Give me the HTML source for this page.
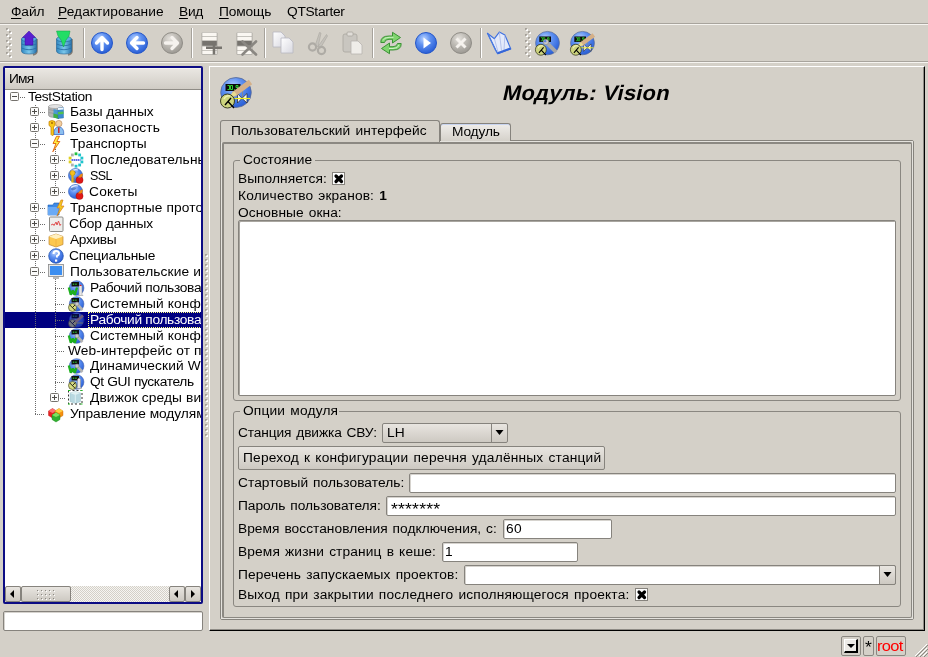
<!DOCTYPE html>
<html><head><meta charset="utf-8"><style>
*{box-sizing:border-box}
html,body{margin:0;padding:0}
body{width:928px;height:657px;overflow:hidden;position:relative;background:#d4d0c8;font-family:"Liberation Sans",sans-serif;font-size:12.5px;letter-spacing:.25px;word-spacing:1px;color:#000}
.a{position:absolute}
.t{position:absolute;white-space:nowrap;line-height:15px;-webkit-text-stroke-width:0;transform:scaleX(1.1);transform-origin:0 0}
.u{text-decoration:underline;text-underline-offset:2px}
.edit{position:absolute;background:#fff;border:1px solid #86837d;border-radius:2px;box-shadow:inset 1px 1px 0 #d6d3ce}
.btn{position:absolute;border:1px solid #86837d;border-radius:2px;background:linear-gradient(#e8e5e0,#cdc9c2)}
svg.a{overflow:visible}
</style></head><body><div id="root" style="position:absolute;left:0;top:0;width:928px;height:657px;will-change:transform">
<svg width="0" height="0" style="position:absolute">
<defs>
<radialGradient id="gblue" cx="40%" cy="30%" r="70%"><stop offset="0" stop-color="#b9d3ff"/><stop offset=".45" stop-color="#5d8ff0"/><stop offset="1" stop-color="#2a5fd6"/></radialGradient>
<radialGradient id="ggray" cx="40%" cy="30%" r="70%"><stop offset="0" stop-color="#e4e1dc"/><stop offset=".5" stop-color="#bdbab4"/><stop offset="1" stop-color="#9d9a94"/></radialGradient>
<linearGradient id="gcyl" x1="0" x2="1"><stop offset="0" stop-color="#2f86c0"/><stop offset=".5" stop-color="#7cc8ec"/><stop offset="1" stop-color="#2a74ad"/></linearGradient>
<linearGradient id="gdoc" x1="0" y1="0" x2="1" y2="1"><stop offset="0" stop-color="#ffffff"/><stop offset="1" stop-color="#d8d8e0"/></linearGradient>
</defs>
</svg>
<div class="a" style="left:0;top:23px;width:928px;height:1px;background:#a8a49d"></div>
<div class="a" style="left:0;top:24px;width:928px;height:1px;background:#f6f4f0"></div>
<div class="t" style="left:10.5px;top:5px;letter-spacing:-0.088px;"><span class="u">Ф</span>айл</div>
<div class="t" style="left:58.0px;top:5px;letter-spacing:0.065px;"><span class="u">Р</span>едактирование</div>
<div class="t" style="left:179.0px;top:5px;letter-spacing:-0.250px;"><span class="u">В</span>ид</div>
<div class="t" style="left:219.0px;top:5px;letter-spacing:-0.150px;"><span class="u">П</span>омощь</div>
<div class="t" style="left:287.0px;top:5px;letter-spacing:.4px;letter-spacing:-0.275px;">QTStarter</div>
<div class="a" style="left:0;top:61px;width:928px;height:1px;background:#a8a49d"></div>
<div class="a" style="left:0;top:62px;width:928px;height:1px;background:#f6f4f0"></div>
<svg class="a" style="left:6px;top:28px" width="13" height="32" viewBox="0 0 13 32"><rect x="1" y="1" width="2" height="2" fill="#fff"/><rect x="0" y="0" width="2" height="2" fill="#a6a29b"/><rect x="1" y="1" width="1" height="1" fill="#c8c4bd"/><rect x="4" y="4" width="2" height="2" fill="#fff"/><rect x="3" y="3" width="2" height="2" fill="#a6a29b"/><rect x="4" y="4" width="1" height="1" fill="#c8c4bd"/><rect x="1" y="7" width="2" height="2" fill="#fff"/><rect x="0" y="6" width="2" height="2" fill="#a6a29b"/><rect x="1" y="7" width="1" height="1" fill="#c8c4bd"/><rect x="4" y="10" width="2" height="2" fill="#fff"/><rect x="3" y="9" width="2" height="2" fill="#a6a29b"/><rect x="4" y="10" width="1" height="1" fill="#c8c4bd"/><rect x="1" y="13" width="2" height="2" fill="#fff"/><rect x="0" y="12" width="2" height="2" fill="#a6a29b"/><rect x="1" y="13" width="1" height="1" fill="#c8c4bd"/><rect x="4" y="16" width="2" height="2" fill="#fff"/><rect x="3" y="15" width="2" height="2" fill="#a6a29b"/><rect x="4" y="16" width="1" height="1" fill="#c8c4bd"/><rect x="1" y="19" width="2" height="2" fill="#fff"/><rect x="0" y="18" width="2" height="2" fill="#a6a29b"/><rect x="1" y="19" width="1" height="1" fill="#c8c4bd"/><rect x="4" y="22" width="2" height="2" fill="#fff"/><rect x="3" y="21" width="2" height="2" fill="#a6a29b"/><rect x="4" y="22" width="1" height="1" fill="#c8c4bd"/><rect x="1" y="25" width="2" height="2" fill="#fff"/><rect x="0" y="24" width="2" height="2" fill="#a6a29b"/><rect x="1" y="25" width="1" height="1" fill="#c8c4bd"/><rect x="4" y="28" width="2" height="2" fill="#fff"/><rect x="3" y="27" width="2" height="2" fill="#a6a29b"/><rect x="4" y="28" width="1" height="1" fill="#c8c4bd"/></svg>
<svg class="a" style="left:17px;top:30px" width="24" height="25" viewBox="0 0 24 25"><path d="M20 9 v12 q0 3 -4 4" fill="none" stroke="#3a3530" stroke-width="1.6" opacity=".55"/><path d="M4.5 9 v12 q0 3 7.5 3 q7.5 0 7.5 -3 v-12 z" fill="url(#gcyl)" stroke="#1f5f92" stroke-width=".6"/><ellipse cx="12" cy="9" rx="7.5" ry="2.8" fill="#5ab0e0" stroke="#1f5f92" stroke-width=".6"/><path d="M4.5 14 q7.5 3.5 15 0 M4.5 18 q7.5 3.5 15 0" fill="none" stroke="#2a6fa5" stroke-width=".9"/><path d="M12 1 L18.5 7.5 L16 7.5 L16 15 L8 15 L8 7.5 L5.5 7.5 Z" fill="#5a1fd0" stroke="#3b0fa0" stroke-width=".5"/></svg>
<svg class="a" style="left:52px;top:30px" width="24" height="25" viewBox="0 0 24 25"><path d="M20 9 v12 q0 3 -4 4" fill="none" stroke="#3a3530" stroke-width="1.6" opacity=".55"/><path d="M4.5 9 v12 q0 3 7.5 3 q7.5 0 7.5 -3 v-12 z" fill="url(#gcyl)" stroke="#1f5f92" stroke-width=".6"/><ellipse cx="12" cy="9" rx="7.5" ry="2.8" fill="#5ab0e0" stroke="#1f5f92" stroke-width=".6"/><path d="M4.5 14 q7.5 3.5 15 0 M4.5 18 q7.5 3.5 15 0" fill="none" stroke="#2a6fa5" stroke-width=".9"/><path d="M4.5 1 L18 1 L17 6 L14 10 L11.5 17 L9 10 L6 6 Z" fill="#22dd66" stroke="#10a040" stroke-width=".5"/></svg>
<div class="a" style="left:83px;top:28px;width:1px;height:30px;background:#a6a29b"></div>
<div class="a" style="left:84px;top:28px;width:1px;height:30px;background:#fff"></div>
<svg class="a" style="left:91px;top:32px" width="22" height="22" viewBox="0 0 22 22"><circle cx="11" cy="11" r="10.5" fill="url(#gblue)" stroke="#2456c8" stroke-width="1"/><path d="M5.5 11 L11 5.5 L16.5 11 M11 6.5 V17.5" fill="none" stroke="#ffffff" stroke-width="3.4" stroke-linecap="round" stroke-linejoin="round"/></svg>
<svg class="a" style="left:126px;top:32px" width="22" height="22" viewBox="0 0 22 22"><circle cx="11" cy="11" r="10.5" fill="url(#gblue)" stroke="#2456c8" stroke-width="1"/><path d="M11 5.5 L5.5 11 L11 16.5 M6.5 11 H17.5" fill="none" stroke="#ffffff" stroke-width="3.4" stroke-linecap="round" stroke-linejoin="round"/></svg>
<svg class="a" style="left:161px;top:32px" width="22" height="22" viewBox="0 0 22 22"><circle cx="11" cy="11" r="10.5" fill="url(#ggray)" stroke="#8f8c86" stroke-width="1"/><path d="M11 5.5 L16.5 11 L11 16.5 M15.5 11 H4.5" fill="none" stroke="#f5f2ee" stroke-width="3.4" stroke-linecap="round" stroke-linejoin="round"/></svg>
<div class="a" style="left:191px;top:28px;width:1px;height:30px;background:#a6a29b"></div>
<div class="a" style="left:192px;top:28px;width:1px;height:30px;background:#fff"></div>
<svg class="a" style="left:201px;top:31px" width="22" height="25" viewBox="0 0 22 25"><rect x=".5" y="1" width="16" height="23" rx="1.5" fill="#a8a59f"/><rect x="1.3" y="1.6" width="14.4" height="3.6" fill="#faf7f2"/><rect x="1.3" y="5.8" width="14.4" height="3.6" fill="#faf7f2"/><rect x="1.3" y="10" width="14.4" height="4.6" fill="#76736e"/><rect x="1.3" y="15.4" width="14.4" height="3.6" fill="#faf7f2"/><rect x="1.3" y="19.6" width="14.4" height="3.6" fill="#faf7f2"/><path d="M5 16.8 H21 M13 10.5 V23.5" stroke="#76736e" stroke-width="2.6"/></svg>
<svg class="a" style="left:236px;top:31px" width="22" height="25" viewBox="0 0 22 25"><rect x=".5" y="1" width="16" height="23" rx="1.5" fill="#a8a59f"/><rect x="1.3" y="1.6" width="14.4" height="3.6" fill="#faf7f2"/><rect x="1.3" y="5.8" width="14.4" height="3.6" fill="#faf7f2"/><rect x="1.3" y="10" width="14.4" height="4.6" fill="#76736e"/><rect x="1.3" y="15.4" width="14.4" height="3.6" fill="#faf7f2"/><rect x="1.3" y="19.6" width="14.4" height="3.6" fill="#faf7f2"/><path d="M6.5 10.5 L20 23.5 M20 10.5 L6.5 23.5" stroke="#8a8782" stroke-width="2.6" stroke-linecap="round"/></svg>
<div class="a" style="left:264px;top:28px;width:1px;height:30px;background:#a6a29b"></div>
<div class="a" style="left:265px;top:28px;width:1px;height:30px;background:#fff"></div>
<svg class="a" style="left:272px;top:31px" width="23" height="24" viewBox="0 0 23 24"><path d="M1 1 H9 L13 5 V16 H1 Z" fill="url(#gdoc)" stroke="#b7b7c0" stroke-width=".8"/><path d="M9 7 H17 L21 11 V22 H9 Z" fill="url(#gdoc)" stroke="#b7b7c0" stroke-width=".8"/></svg>
<svg class="a" style="left:307px;top:31px" width="22" height="25" viewBox="0 0 22 25"><path d="M8 15 L12.5 1.5 L14 2 L11 16 Z M11 15.5 L19.5 3.5 L20.5 5 L13.5 17 Z" fill="#c4c1bb" stroke="#a9a6a0" stroke-width=".6"/><circle cx="5.5" cy="16" r="3.6" fill="none" stroke="#aeaba5" stroke-width="2.2"/><circle cx="14.5" cy="19.5" r="3.6" fill="none" stroke="#aeaba5" stroke-width="2.2"/></svg>
<svg class="a" style="left:342px;top:31px" width="22" height="24" viewBox="0 0 22 24"><rect x="1" y="3" width="14" height="18" rx="2" fill="#c9c6c0" stroke="#a9a6a0" stroke-width=".8"/><rect x="5" y="1" width="6" height="4" rx="1" fill="#e0ddd8" stroke="#a9a6a0" stroke-width=".8"/><path d="M9 10 H16 L20 14 V23 H9 Z" fill="#efede9" stroke="#b7b4ae" stroke-width=".8"/></svg>
<div class="a" style="left:372px;top:28px;width:1px;height:30px;background:#a6a29b"></div>
<div class="a" style="left:373px;top:28px;width:1px;height:30px;background:#fff"></div>
<svg class="a" style="left:380px;top:32px" width="22" height="23" viewBox="0 0 22 23"><path d="M0.8 10.5 Q0.5 4 9 4 L12.5 4 L12.5 0.3 L20.5 5.5 L12.5 11 L12.5 7.3 L9 7.3 Q5 7.3 4.5 10.5 Z" fill="#7fd46e" stroke="#2f8a2a" stroke-width=".9"/><path d="M21.2 11.5 Q21.5 18 13 18 L9.5 18 L9.5 21.7 L1.5 16.5 L9.5 11 L9.5 14.7 L13 14.7 Q17 14.7 17.5 11.5 Z" fill="#7fd46e" stroke="#2f8a2a" stroke-width=".9"/><path d="M3 8.5 Q4 5.5 9 5.3 L13.5 5.3" stroke="#d8f5d0" stroke-width=".9" fill="none"/><path d="M19 13 Q18 16.5 13 16.5 L9 16.5" stroke="#d8f5d0" stroke-width=".9" fill="none"/></svg>
<svg class="a" style="left:415px;top:32px" width="22" height="22" viewBox="0 0 22 22"><circle cx="11" cy="11" r="10.5" fill="url(#gblue)" stroke="#2456c8" stroke-width="1"/><path d="M8.5 5.5 L16 11 L8.5 16.5 Z" fill="#ffffff"/></svg>
<svg class="a" style="left:450px;top:32px" width="22" height="22" viewBox="0 0 22 22"><circle cx="11" cy="11" r="10.5" fill="url(#ggray)" stroke="#8f8c86" stroke-width="1"/><path d="M6.5 6.5 L15.5 15.5 M15.5 6.5 L6.5 15.5" stroke="#f5f2ee" stroke-width="3"/></svg>
<div class="a" style="left:480px;top:28px;width:1px;height:30px;background:#a6a29b"></div>
<div class="a" style="left:481px;top:28px;width:1px;height:30px;background:#fff"></div>
<svg class="a" style="left:486px;top:30px" width="26" height="25" viewBox="0 0 26 25"><path d="M1.4 3.3 L8.4 8.7 L13.3 2.1 L18.9 5 L24.8 18.9 L11.6 23.8 Z" fill="#e4eafa" stroke="#3d6fe0" stroke-width="1.1" stroke-linejoin="round"/><path d="M8.4 8.7 L12 22 M13.3 2.1 L15.5 20.5 M18.9 5 L18 20" stroke="#a8b8e8" stroke-width=".8" fill="none"/><path d="M11.6 23.3 L24.5 18.5" stroke="#3566d8" stroke-width="2"/><path d="M2 4 L9.5 20 L11.6 23.3" stroke="#4a7ae0" stroke-width="1.2" fill="none"/></svg>
<svg class="a" style="left:525px;top:28px" width="13" height="32" viewBox="0 0 13 32"><rect x="1" y="1" width="2" height="2" fill="#fff"/><rect x="0" y="0" width="2" height="2" fill="#a6a29b"/><rect x="1" y="1" width="1" height="1" fill="#c8c4bd"/><rect x="4" y="4" width="2" height="2" fill="#fff"/><rect x="3" y="3" width="2" height="2" fill="#a6a29b"/><rect x="4" y="4" width="1" height="1" fill="#c8c4bd"/><rect x="1" y="7" width="2" height="2" fill="#fff"/><rect x="0" y="6" width="2" height="2" fill="#a6a29b"/><rect x="1" y="7" width="1" height="1" fill="#c8c4bd"/><rect x="4" y="10" width="2" height="2" fill="#fff"/><rect x="3" y="9" width="2" height="2" fill="#a6a29b"/><rect x="4" y="10" width="1" height="1" fill="#c8c4bd"/><rect x="1" y="13" width="2" height="2" fill="#fff"/><rect x="0" y="12" width="2" height="2" fill="#a6a29b"/><rect x="1" y="13" width="1" height="1" fill="#c8c4bd"/><rect x="4" y="16" width="2" height="2" fill="#fff"/><rect x="3" y="15" width="2" height="2" fill="#a6a29b"/><rect x="4" y="16" width="1" height="1" fill="#c8c4bd"/><rect x="1" y="19" width="2" height="2" fill="#fff"/><rect x="0" y="18" width="2" height="2" fill="#a6a29b"/><rect x="1" y="19" width="1" height="1" fill="#c8c4bd"/><rect x="4" y="22" width="2" height="2" fill="#fff"/><rect x="3" y="21" width="2" height="2" fill="#a6a29b"/><rect x="4" y="22" width="1" height="1" fill="#c8c4bd"/><rect x="1" y="25" width="2" height="2" fill="#fff"/><rect x="0" y="24" width="2" height="2" fill="#a6a29b"/><rect x="1" y="25" width="1" height="1" fill="#c8c4bd"/><rect x="4" y="28" width="2" height="2" fill="#fff"/><rect x="3" y="27" width="2" height="2" fill="#a6a29b"/><rect x="4" y="28" width="1" height="1" fill="#c8c4bd"/></svg>
<svg class="a" style="left:535px;top:31px" width="25" height="25" viewBox="0 0 25 25"><g transform="scale(0.78125)"><ellipse cx="16" cy="15.5" rx="15.3" ry="15" fill="url(#gblue)" stroke="#5a6a90" stroke-width=".8"/><rect x="5.5" y="7" width="15" height="7" fill="#0a0a0a"/><path d="M7.5 8.5 h2 v4 h-2 M10.5 8.5 v4 h2 v-4 z M14 12.5 h.8 M16 8.5 h2 v2 h-2 z M18 10.5 v2" fill="none" stroke="#30d030" stroke-width="1"/><path d="M14 14 L27 27" stroke="#a8a8a8" stroke-width="5"/><circle cx="14" cy="14" r="3.5" fill="#c8c8c8" stroke="#777" stroke-width=".6"/><circle cx="13" cy="13" r="1.5" fill="#5a7fe0"/><circle cx="7.5" cy="24" r="7" fill="#cdd47e" stroke="#3a3c20" stroke-width="1"/><path d="M4 22 a5 5 0 0 1 6 -3" stroke="#eef0b0" stroke-width="1.5" fill="none"/><path d="M11 21 L5 28 M8 24.5 L14 31" stroke="#000" stroke-width="1.4"/></g></svg>
<svg class="a" style="left:570px;top:31px" width="25" height="25" viewBox="0 0 25 25"><g transform="scale(0.78125)"><ellipse cx="16" cy="15.5" rx="15.3" ry="15" fill="url(#gblue)" stroke="#5a6a90" stroke-width=".8"/><rect x="5.5" y="7" width="15" height="7" fill="#0a0a0a"/><path d="M7.5 8.5 h2 v4 h-2 M10.5 8.5 v4 h2 v-4 z M14 12.5 h.8 M16 8.5 h2 v2 h-2 z M18 10.5 v2" fill="none" stroke="#30d030" stroke-width="1"/><path d="M22.5 14 v7.5" stroke="#888" stroke-width=".8"/><path d="M17.5 16.5 L22 21.3 L17.5 26 Z M27 16.5 L22 21.3 L27 26 Z" fill="#f0f0f0" stroke="#222" stroke-width=".7"/><path d="M4.5 21.5 H30" stroke="#f0f020" stroke-width="1.2"/><path d="M30.5 5 L13.5 17.5" stroke="#d5b088" stroke-width="5.5" stroke-linecap="butt"/><path d="M15.5 16 L11 19.5" stroke="#e8dc90" stroke-width="4"/><path d="M12 19 L10 20.5" stroke="#111" stroke-width="1.5"/><circle cx="7.5" cy="24" r="7" fill="#cdd47e" stroke="#3a3c20" stroke-width="1"/><path d="M4 22 a5 5 0 0 1 6 -3" stroke="#eef0b0" stroke-width="1.5" fill="none"/><path d="M11 21 L5 28 M8 24.5 L14 31" stroke="#000" stroke-width="1.4"/></g></svg>
<div class="a" style="left:3px;top:66px;width:200px;height:538px;border:2px solid #0c0c84;border-radius:2px;background:#fff"></div>
<div class="a" style="left:5px;top:68px;width:196px;height:22px;background:linear-gradient(#e9e6e1,#d0ccc5);border-bottom:1px solid #8f8c86;border-top:1px solid #f4f2ee"></div>
<div class="t" style="left:9.0px;top:72px;letter-spacing:-0.750px;">Имя</div>
<div class="a" style="left:5px;top:90px;width:196px;height:496px;overflow:hidden">
<div class="a" style="left:0;top:222px;width:196px;height:16px;background:#000080"></div>
<div class="a" style="left:30px;top:15px;width:1px;height:309px;background-image:linear-gradient(#6a6a6a 0 1px,transparent 1px 2px);background-size:1px 2px"></div>
<div class="a" style="left:50px;top:59px;width:1px;height:44px;background-image:linear-gradient(#6a6a6a 0 1px,transparent 1px 2px);background-size:1px 2px"></div>
<div class="a" style="left:50px;top:187px;width:1px;height:121px;background-image:linear-gradient(#6a6a6a 0 1px,transparent 1px 2px);background-size:1px 2px"></div>
<div class="a" style="left:15px;top:7px;width:5px;height:1px;background-image:linear-gradient(90deg,#6a6a6a 0 1px,transparent 1px 2px);background-size:2px 1px"></div>
<div class="a" style="left:35px;top:22px;width:5px;height:1px;background-image:linear-gradient(90deg,#6a6a6a 0 1px,transparent 1px 2px);background-size:2px 1px"></div>
<div class="a" style="left:35px;top:38px;width:5px;height:1px;background-image:linear-gradient(90deg,#6a6a6a 0 1px,transparent 1px 2px);background-size:2px 1px"></div>
<div class="a" style="left:35px;top:54px;width:5px;height:1px;background-image:linear-gradient(90deg,#6a6a6a 0 1px,transparent 1px 2px);background-size:2px 1px"></div>
<div class="a" style="left:55px;top:70px;width:5px;height:1px;background-image:linear-gradient(90deg,#6a6a6a 0 1px,transparent 1px 2px);background-size:2px 1px"></div>
<div class="a" style="left:55px;top:86px;width:5px;height:1px;background-image:linear-gradient(90deg,#6a6a6a 0 1px,transparent 1px 2px);background-size:2px 1px"></div>
<div class="a" style="left:55px;top:102px;width:5px;height:1px;background-image:linear-gradient(90deg,#6a6a6a 0 1px,transparent 1px 2px);background-size:2px 1px"></div>
<div class="a" style="left:35px;top:118px;width:5px;height:1px;background-image:linear-gradient(90deg,#6a6a6a 0 1px,transparent 1px 2px);background-size:2px 1px"></div>
<div class="a" style="left:35px;top:134px;width:5px;height:1px;background-image:linear-gradient(90deg,#6a6a6a 0 1px,transparent 1px 2px);background-size:2px 1px"></div>
<div class="a" style="left:35px;top:150px;width:5px;height:1px;background-image:linear-gradient(90deg,#6a6a6a 0 1px,transparent 1px 2px);background-size:2px 1px"></div>
<div class="a" style="left:35px;top:166px;width:5px;height:1px;background-image:linear-gradient(90deg,#6a6a6a 0 1px,transparent 1px 2px);background-size:2px 1px"></div>
<div class="a" style="left:35px;top:182px;width:5px;height:1px;background-image:linear-gradient(90deg,#6a6a6a 0 1px,transparent 1px 2px);background-size:2px 1px"></div>
<div class="a" style="left:50px;top:198px;width:10px;height:1px;background-image:linear-gradient(90deg,#6a6a6a 0 1px,transparent 1px 2px);background-size:2px 1px"></div>
<div class="a" style="left:50px;top:214px;width:10px;height:1px;background-image:linear-gradient(90deg,#6a6a6a 0 1px,transparent 1px 2px);background-size:2px 1px"></div>
<div class="a" style="left:50px;top:230px;width:10px;height:1px;background-image:linear-gradient(90deg,#6a6a6a 0 1px,transparent 1px 2px);background-size:2px 1px"></div>
<div class="a" style="left:50px;top:246px;width:10px;height:1px;background-image:linear-gradient(90deg,#6a6a6a 0 1px,transparent 1px 2px);background-size:2px 1px"></div>
<div class="a" style="left:50px;top:261px;width:10px;height:1px;background-image:linear-gradient(90deg,#6a6a6a 0 1px,transparent 1px 2px);background-size:2px 1px"></div>
<div class="a" style="left:50px;top:276px;width:10px;height:1px;background-image:linear-gradient(90deg,#6a6a6a 0 1px,transparent 1px 2px);background-size:2px 1px"></div>
<div class="a" style="left:50px;top:292px;width:10px;height:1px;background-image:linear-gradient(90deg,#6a6a6a 0 1px,transparent 1px 2px);background-size:2px 1px"></div>
<div class="a" style="left:55px;top:308px;width:5px;height:1px;background-image:linear-gradient(90deg,#6a6a6a 0 1px,transparent 1px 2px);background-size:2px 1px"></div>
<div class="a" style="left:30px;top:324px;width:10px;height:1px;background-image:linear-gradient(90deg,#6a6a6a 0 1px,transparent 1px 2px);background-size:2px 1px"></div>
<svg class="a" style="left:5px;top:2px" width="9" height="9" viewBox="0 0 9 9"><rect x=".5" y=".5" width="8" height="8" rx="1" fill="#fbfbfa" stroke="#75726d" stroke-width="1"/><path d="M2 4.5 H7" stroke="#4d4b48" stroke-width="1"/></svg>
<div class="t" style="left:23.2px;top:0px;letter-spacing:.1px;word-spacing:0px;letter-spacing:-0.320px;">TestStation</div>
<svg class="a" style="left:25px;top:17px" width="9" height="9" viewBox="0 0 9 9"><rect x=".5" y=".5" width="8" height="8" rx="1" fill="#fbfbfa" stroke="#75726d" stroke-width="1"/><path d="M2 4.5 H7" stroke="#4d4b48" stroke-width="1"/><path d="M4.5 2 V7" stroke="#4d4b48" stroke-width="1"/></svg>
<svg class="a" style="left:43px;top:14px" width="16" height="16" viewBox="0 0 16 16"><path d="M0.5 2.5 v8.5 q0 2.5 7 2.5 q7 0 7 -2.5 v-8.5 z" fill="#b4b4b4" stroke="#8a8a8a" stroke-width=".6"/><ellipse cx="7.5" cy="2.5" rx="7" ry="2" fill="#e2e2e2" stroke="#8a8a8a" stroke-width=".5"/><path d="M0.5 5.5 q7 2.5 14 0 M0.5 8.5 q7 2.5 14 0" fill="none" stroke="#8c8c8c" stroke-width=".6"/><path d="M5.5 5 L11 6.5 L11 15 L5.5 13.5 Z" fill="#4a9ad0"/><path d="M5.5 9.5 L11 11 L11 15 L5.5 13.5 Z" fill="#40b040"/><path d="M10 4 L15.5 3.5 L15.5 14 L10 14.5 Z" fill="#3a8ad0" stroke="#2a6aa0" stroke-width=".4"/><path d="M10 4 L15.5 3.5 L15.5 5.5 L10 6 Z" fill="#f0f8ff"/><path d="M10 8 L15.5 7.5 L15.5 10 L10 10.5 Z" fill="#50c050"/></svg>
<div class="t" style="left:64.7px;top:15px;letter-spacing:.1px;word-spacing:0px;letter-spacing:-0.050px;">Базы данных</div>
<svg class="a" style="left:25px;top:33px" width="9" height="9" viewBox="0 0 9 9"><rect x=".5" y=".5" width="8" height="8" rx="1" fill="#fbfbfa" stroke="#75726d" stroke-width="1"/><path d="M2 4.5 H7" stroke="#4d4b48" stroke-width="1"/><path d="M4.5 2 V7" stroke="#4d4b48" stroke-width="1"/></svg>
<svg class="a" style="left:43px;top:30px" width="16" height="16" viewBox="0 0 16 16"><circle cx="10.8" cy="3.6" r="3.2" fill="#f3cfa0" stroke="#b08050" stroke-width=".6"/><path d="M6 14.5 q-0.5 -7.5 4.8 -7.5 q5.2 0 5 7.5 z" fill="#8cc0f0" stroke="#2a5fc0" stroke-width=".7"/><path d="M10.8 7.5 v5.5" stroke="#d01818" stroke-width="1.4"/><path d="M1 1.5 q3 -2 6 0 v4 l-1.5 1.5 v8 l-1.5 .5 l-1 -1 v-7.5 l-2 -1.5 z" fill="#f8c818" stroke="#c07800" stroke-width=".7"/><circle cx="4" cy="3" r=".9" fill="#a06000"/></svg>
<div class="t" style="left:64.7px;top:31px;letter-spacing:.1px;word-spacing:0px;letter-spacing:0.190px;">Безопасность</div>
<svg class="a" style="left:25px;top:49px" width="9" height="9" viewBox="0 0 9 9"><rect x=".5" y=".5" width="8" height="8" rx="1" fill="#fbfbfa" stroke="#75726d" stroke-width="1"/><path d="M2 4.5 H7" stroke="#4d4b48" stroke-width="1"/></svg>
<svg class="a" style="left:43px;top:46px" width="16" height="16" viewBox="0 0 16 16"><path d="M8.5 0.3 L5 7.5 L8 7.5 L4.8 15.8 L11.8 5.5 L8.8 5.5 L11.5 0.3 Z" fill="#fff040" stroke="#e06010" stroke-width=".9"/></svg>
<div class="t" style="left:65.4px;top:47px;letter-spacing:.1px;word-spacing:0px;letter-spacing:0.071px;">Транспорты</div>
<svg class="a" style="left:45px;top:65px" width="9" height="9" viewBox="0 0 9 9"><rect x=".5" y=".5" width="8" height="8" rx="1" fill="#fbfbfa" stroke="#75726d" stroke-width="1"/><path d="M2 4.5 H7" stroke="#4d4b48" stroke-width="1"/><path d="M4.5 2 V7" stroke="#4d4b48" stroke-width="1"/></svg>
<svg class="a" style="left:63px;top:62px" width="16" height="16" viewBox="0 0 16 16"><rect x="6.60" y="0.40" width="2.8" height="2.8" fill="#22c040"/><rect x="10.24" y="1.58" width="2.8" height="2.8" fill="#20c4cc"/><rect x="12.50" y="4.68" width="2.8" height="2.8" fill="#20c4cc"/><rect x="12.50" y="8.52" width="2.8" height="2.8" fill="#20c4cc"/><rect x="10.24" y="11.62" width="2.8" height="2.8" fill="#20c4cc"/><rect x="6.60" y="12.80" width="2.8" height="2.8" fill="#20c4cc"/><rect x="2.96" y="11.62" width="2.8" height="2.8" fill="#b0b0b0"/><rect x="0.70" y="8.52" width="2.8" height="2.8" fill="#e0d020"/><rect x="0.70" y="4.68" width="2.8" height="2.8" fill="#e0d020"/><rect x="2.96" y="1.58" width="2.8" height="2.8" fill="#b0b0b0"/><path d="M3.5 8 h9" stroke="#2a3ae0" stroke-width="1.6" stroke-dasharray="1.5 .5"/></svg>
<div class="t" style="left:85px;top:63px;letter-spacing:.1px;word-spacing:0px;">Последовательные</div>
<svg class="a" style="left:45px;top:81px" width="9" height="9" viewBox="0 0 9 9"><rect x=".5" y=".5" width="8" height="8" rx="1" fill="#fbfbfa" stroke="#75726d" stroke-width="1"/><path d="M2 4.5 H7" stroke="#4d4b48" stroke-width="1"/><path d="M4.5 2 V7" stroke="#4d4b48" stroke-width="1"/></svg>
<svg class="a" style="left:63px;top:78px" width="16" height="16" viewBox="0 0 16 16"><circle cx="7.5" cy="7.5" r="7" fill="url(#gblue)" stroke="#2a5ab8" stroke-width=".6"/><path d="M2.5 5 q3 -3 6 -1 q-1 2 -4 2.5 z M9 9 q3 -1 5 1 q-1 3 -4 3 z" fill="#1f4aa0" opacity=".55"/><path d="M3 3.5 q3 -2.5 7 -1.5" stroke="#ffffff" stroke-width="1.2" fill="none" opacity=".8"/><circle cx="11.5" cy="12" r="3.6" fill="#e01818" stroke="#900" stroke-width=".4"/><path d="M10 9.5 q2 -4 5 -4 q-1 2 0 3 q-1 -0.5 -2 1 z" fill="#f08a10"/><circle cx="4.5" cy="5" r="2.6" fill="#f5c020" stroke="#b07800" stroke-width=".5"/><path d="M4.5 7 v7.5" stroke="#e8b010" stroke-width="2.2"/><path d="M5.5 11 h1.5 M5.5 13 h1.5" stroke="#c08800" stroke-width=".8"/></svg>
<div class="t" style="left:85.0px;top:79px;letter-spacing:.1px;word-spacing:0px;transform:none;letter-spacing:-0.600px;">SSL</div>
<svg class="a" style="left:45px;top:97px" width="9" height="9" viewBox="0 0 9 9"><rect x=".5" y=".5" width="8" height="8" rx="1" fill="#fbfbfa" stroke="#75726d" stroke-width="1"/><path d="M2 4.5 H7" stroke="#4d4b48" stroke-width="1"/><path d="M4.5 2 V7" stroke="#4d4b48" stroke-width="1"/></svg>
<svg class="a" style="left:63px;top:94px" width="16" height="16" viewBox="0 0 16 16"><circle cx="7.5" cy="7.5" r="7" fill="url(#gblue)" stroke="#2a5ab8" stroke-width=".6"/><path d="M2.5 5 q3 -3 6 -1 q-1 2 -4 2.5 z M9 9 q3 -1 5 1 q-1 3 -4 3 z" fill="#1f4aa0" opacity=".55"/><path d="M3 3.5 q3 -2.5 7 -1.5" stroke="#ffffff" stroke-width="1.2" fill="none" opacity=".8"/><circle cx="11.5" cy="12" r="3.6" fill="#e01818" stroke="#900" stroke-width=".4"/><path d="M10 9.5 q2 -4 5 -4 q-1 2 0 3 q-1 -0.5 -2 1 z" fill="#f08a10"/></svg>
<div class="t" style="left:84.0px;top:95px;letter-spacing:.1px;word-spacing:0px;letter-spacing:0.240px;">Сокеты</div>
<svg class="a" style="left:25px;top:113px" width="9" height="9" viewBox="0 0 9 9"><rect x=".5" y=".5" width="8" height="8" rx="1" fill="#fbfbfa" stroke="#75726d" stroke-width="1"/><path d="M2 4.5 H7" stroke="#4d4b48" stroke-width="1"/><path d="M4.5 2 V7" stroke="#4d4b48" stroke-width="1"/></svg>
<svg class="a" style="left:43px;top:110px" width="16" height="16" viewBox="0 0 16 16"><path d="M0 5 h5 l1 -2 h5 v12 h-11 z" fill="#3d8ae8" stroke="#1f5fb0" stroke-width=".6"/><path d="M0 7 h11 l-1 8 h-10 z" fill="#6aaaf5"/><path d="M13 0 L9 8 L12 8 L9 16 L16 6 L13 6 L15 0 Z" fill="#f5c820" stroke="#d07010" stroke-width=".6"/></svg>
<div class="t" style="left:65px;top:111px;letter-spacing:.1px;word-spacing:0px;">Транспортные протоколы</div>
<svg class="a" style="left:25px;top:129px" width="9" height="9" viewBox="0 0 9 9"><rect x=".5" y=".5" width="8" height="8" rx="1" fill="#fbfbfa" stroke="#75726d" stroke-width="1"/><path d="M2 4.5 H7" stroke="#4d4b48" stroke-width="1"/><path d="M4.5 2 V7" stroke="#4d4b48" stroke-width="1"/></svg>
<svg class="a" style="left:43px;top:126px" width="16" height="16" viewBox="0 0 16 16"><rect x="1.5" y="1" width="13.5" height="14.5" rx="1" fill="#eeeeec" stroke="#8c8c88" stroke-width="1"/><path d="M3 9 L5 8 L6 9.5 L8 6 L9 9 L10.5 5 L12 9.5 L13 8" fill="none" stroke="#e05050" stroke-width="1"/></svg>
<div class="t" style="left:64.2px;top:127px;letter-spacing:.1px;word-spacing:0px;letter-spacing:-0.040px;">Сбор данных</div>
<svg class="a" style="left:25px;top:145px" width="9" height="9" viewBox="0 0 9 9"><rect x=".5" y=".5" width="8" height="8" rx="1" fill="#fbfbfa" stroke="#75726d" stroke-width="1"/><path d="M2 4.5 H7" stroke="#4d4b48" stroke-width="1"/><path d="M4.5 2 V7" stroke="#4d4b48" stroke-width="1"/></svg>
<svg class="a" style="left:43px;top:142px" width="16" height="16" viewBox="0 0 16 16"><path d="M1 4.5 L8 2 L15 4.5 L15 12.5 L8 15 L1 12.5 Z" fill="#fcc850" stroke="#c08830" stroke-width=".7"/><path d="M1 4.5 L8 2 L15 4.5 L8 7 Z" fill="#fff0c0"/><path d="M8 7 V15" stroke="#f0b040" stroke-width=".8"/></svg>
<div class="t" style="left:65.2px;top:143px;letter-spacing:.1px;word-spacing:0px;letter-spacing:-0.320px;">Архивы</div>
<svg class="a" style="left:25px;top:161px" width="9" height="9" viewBox="0 0 9 9"><rect x=".5" y=".5" width="8" height="8" rx="1" fill="#fbfbfa" stroke="#75726d" stroke-width="1"/><path d="M2 4.5 H7" stroke="#4d4b48" stroke-width="1"/><path d="M4.5 2 V7" stroke="#4d4b48" stroke-width="1"/></svg>
<svg class="a" style="left:43px;top:158px" width="16" height="16" viewBox="0 0 16 16"><circle cx="8" cy="8" r="7.3" fill="url(#gblue)" stroke="#1d4fa8" stroke-width=".7"/><path d="M5.5 6 q0 -3 2.7 -3 q2.8 0 2.8 2.5 q0 1.5 -2 2.5 v1.5" fill="none" stroke="#fff" stroke-width="2"/><rect x="7" y="11.5" width="2.2" height="2.2" fill="#fff"/></svg>
<div class="t" style="left:64.2px;top:159px;letter-spacing:.1px;word-spacing:0px;letter-spacing:-0.200px;">Специальные</div>
<svg class="a" style="left:25px;top:177px" width="9" height="9" viewBox="0 0 9 9"><rect x=".5" y=".5" width="8" height="8" rx="1" fill="#fbfbfa" stroke="#75726d" stroke-width="1"/><path d="M2 4.5 H7" stroke="#4d4b48" stroke-width="1"/></svg>
<svg class="a" style="left:43px;top:174px" width="16" height="16" viewBox="0 0 16 16"><rect x=".5" y=".5" width="15" height="12" fill="#e8e8e8" stroke="#888" stroke-width=".8"/><rect x="2" y="2" width="12" height="9" fill="#3c8ef0"/><path d="M5 13 h6 v2 h-6 z" fill="#bbb"/></svg>
<div class="t" style="left:65px;top:175px;letter-spacing:.1px;word-spacing:0px;">Пользовательские интерфейсы</div>
<svg class="a" style="left:63px;top:190px" width="16" height="16" viewBox="0 0 16 16"><circle cx="8.6" cy="8" r="7.3" fill="url(#gblue)" stroke="#3a5aa8" stroke-width=".6"/><rect x="3.5" y="2" width="7.5" height="4.5" fill="#101010"/><path d="M4.8 3.5 h1.5 v1.5 h-1.5 z M7.2 3.5 h1.5 v1.5 h-1.5 z" fill="#2aa02a"/><path d="M0.8 7.5 L2.8 14.8 L4.8 10.5 L6.8 14.8 L9 7.5" fill="none" stroke="#1eb01e" stroke-width="2.3" stroke-linejoin="bevel"/><path d="M11 14.5 V6.5 q1.5 -3 3 0 V14.5 l1 1 h-5 z" fill="#e8e8e8" stroke="#8a8a8a" stroke-width=".5"/><path d="M11.3 6 q1.2 -2.5 2.4 0 z" fill="#e02020"/></svg>
<div class="t" style="left:85px;top:191px;letter-spacing:.1px;word-spacing:0px;letter-spacing:-0.300px;">Рабочий пользовательский</div>
<svg class="a" style="left:63px;top:206px" width="16" height="16" viewBox="0 0 16 16"><circle cx="8.6" cy="8" r="7.3" fill="url(#gblue)" stroke="#3a5aa8" stroke-width=".6"/><rect x="3.5" y="2" width="7.5" height="4.5" fill="#101010"/><path d="M4.8 3.5 h1.5 v1.5 h-1.5 z M7.2 3.5 h1.5 v1.5 h-1.5 z" fill="#2aa02a"/><circle cx="4.5" cy="11.5" r="4" fill="#d6dc80" stroke="#4a4c28" stroke-width=".7"/><path d="M1.8 9 L7 14.2 M4.5 11.5 L7.5 8.5" stroke="#111" stroke-width=".9"/><path d="M9 8 L14.5 14" stroke="#b4b4b4" stroke-width="2.6"/><circle cx="9" cy="8" r="2" fill="#c8c8c8" stroke="#777" stroke-width=".5"/></svg>
<div class="t" style="left:85px;top:207px;letter-spacing:.1px;word-spacing:0px;">Системный конфигуратор</div>
<svg class="a" style="left:63px;top:222px" width="16" height="16" viewBox="0 0 16 16"><circle cx="8.6" cy="8" r="7.3" fill="url(#gblue)" stroke="#3a5aa8" stroke-width=".6"/><rect x="3.5" y="2" width="7.5" height="4.5" fill="#101010"/><path d="M4.8 3.5 h1.5 v1.5 h-1.5 z M7.2 3.5 h1.5 v1.5 h-1.5 z" fill="#2aa02a"/><circle cx="4.5" cy="11.5" r="4" fill="#d6dc80" stroke="#4a4c28" stroke-width=".7"/><path d="M1.8 9 L7 14.2 M4.5 11.5 L7.5 8.5" stroke="#111" stroke-width=".9"/><path d="M15 3.5 L7.5 10" stroke="#c8a878" stroke-width="2.6"/><path d="M6 11 H15" stroke="#e8e040" stroke-width=".8"/><rect x="0" y="0" width="16" height="16" fill="#000080" opacity=".45"/></svg>
<div class="a" style="left:83px;top:222px;width:200px;height:16px;border:1px dotted #ffff80"></div>
<div class="t" style="left:85px;top:223px;color:#fff;letter-spacing:.1px;word-spacing:0px;letter-spacing:-0.300px;">Рабочий пользовательский</div>
<svg class="a" style="left:63px;top:238px" width="16" height="16" viewBox="0 0 16 16"><circle cx="8.6" cy="8" r="7.3" fill="url(#gblue)" stroke="#3a5aa8" stroke-width=".6"/><rect x="3.5" y="2" width="7.5" height="4.5" fill="#101010"/><path d="M4.8 3.5 h1.5 v1.5 h-1.5 z M7.2 3.5 h1.5 v1.5 h-1.5 z" fill="#2aa02a"/><path d="M0.8 7.5 L2.8 14.8 L4.8 10.5 L6.8 14.8 L9 7.5" fill="none" stroke="#1eb01e" stroke-width="2.3" stroke-linejoin="bevel"/><path d="M9 8 L14.5 14" stroke="#b4b4b4" stroke-width="2.6"/><circle cx="9" cy="8" r="2" fill="#c8c8c8" stroke="#777" stroke-width=".5"/></svg>
<div class="t" style="left:85px;top:239px;letter-spacing:.1px;word-spacing:0px;">Системный конфигуратор</div>
<div class="t" style="left:63px;top:254px;letter-spacing:.1px;word-spacing:0px;">Web-интерфейс от пользователя</div>
<svg class="a" style="left:63px;top:268px" width="16" height="16" viewBox="0 0 16 16"><circle cx="8.6" cy="8" r="7.3" fill="url(#gblue)" stroke="#3a5aa8" stroke-width=".6"/><rect x="3.5" y="2" width="7.5" height="4.5" fill="#101010"/><path d="M4.8 3.5 h1.5 v1.5 h-1.5 z M7.2 3.5 h1.5 v1.5 h-1.5 z" fill="#2aa02a"/><path d="M0.8 7.5 L2.8 14.8 L4.8 10.5 L6.8 14.8 L9 7.5" fill="none" stroke="#1eb01e" stroke-width="2.3" stroke-linejoin="bevel"/><path d="M9 8 L14.5 14" stroke="#b4b4b4" stroke-width="2.6"/><circle cx="9" cy="8" r="2" fill="#c8c8c8" stroke="#777" stroke-width=".5"/></svg>
<div class="t" style="left:85px;top:269px;letter-spacing:.1px;word-spacing:0px;">Динамический WEB</div>
<svg class="a" style="left:63px;top:284px" width="16" height="16" viewBox="0 0 16 16"><circle cx="8.6" cy="8" r="7.3" fill="url(#gblue)" stroke="#3a5aa8" stroke-width=".6"/><rect x="3.5" y="2" width="7.5" height="4.5" fill="#101010"/><path d="M4.8 3.5 h1.5 v1.5 h-1.5 z M7.2 3.5 h1.5 v1.5 h-1.5 z" fill="#2aa02a"/><circle cx="4.5" cy="11.5" r="4" fill="#d6dc80" stroke="#4a4c28" stroke-width=".7"/><path d="M1.8 9 L7 14.2 M4.5 11.5 L7.5 8.5" stroke="#111" stroke-width=".9"/><path d="M9.5 13 V5.5 q1.5 -3 3 0 V13 l1 1.5 h-5 z" fill="#e8e8e8" stroke="#8a8a8a" stroke-width=".5"/></svg>
<div class="t" style="left:85px;top:285px;letter-spacing:.1px;word-spacing:0px;letter-spacing:-0.350px;">Qt GUI пускатель</div>
<svg class="a" style="left:45px;top:303px" width="9" height="9" viewBox="0 0 9 9"><rect x=".5" y=".5" width="8" height="8" rx="1" fill="#fbfbfa" stroke="#75726d" stroke-width="1"/><path d="M2 4.5 H7" stroke="#4d4b48" stroke-width="1"/><path d="M4.5 2 V7" stroke="#4d4b48" stroke-width="1"/></svg>
<svg class="a" style="left:63px;top:300px" width="16" height="16" viewBox="0 0 16 16"><path d="M2 3 L7.3 1.5 L12.5 3 L12.5 11.5 L7.3 13.5 L2 11.5 Z" fill="#b8d8e0" stroke="#98c0c8" stroke-width=".5"/><path d="M2 3 L7.3 5 L12.5 3 L7.3 1.5 Z" fill="#dff0f2"/><path d="M7.3 5 V13.5" stroke="#e8f6f8" stroke-width=".8"/><rect x=".5" y=".5" width="13.5" height="13.5" fill="none" stroke="#333" stroke-width="1" stroke-dasharray="2 2"/><path d="M0 0.5 h2 M12.5 0.5 h2 M0 14 h2 M12.5 14 h2" stroke="#20c020" stroke-width="1"/></svg>
<div class="t" style="left:85px;top:301px;letter-spacing:.1px;word-spacing:0px;">Движок среды визуализации</div>
<svg class="a" style="left:43px;top:316px" width="16" height="16" viewBox="0 0 16 16"><path d="M0.5 5 L4.5 2.5 L8.5 5 L8.5 9.5 L4.5 12 L0.5 9.5 Z" fill="#e82020" stroke="#b01010" stroke-width=".4"/><path d="M0.5 5 L4.5 2.5 L8.5 5 L4.5 7 Z" fill="#ff7070"/><path d="M7 5 L11 2.5 L15 5 L15 9.5 L11 12 L7 9.5 Z" fill="#f59010" stroke="#c06000" stroke-width=".4"/><path d="M7 5 L11 2.5 L15 5 L11 7 Z" fill="#ffd040"/><path d="M4 9 L8 6.5 L12 9 L12 13.5 L8 16 L4 13.5 Z" fill="#30b030" stroke="#108010" stroke-width=".4"/><path d="M4 9 L8 6.5 L12 9 L8 11 Z" fill="#80e060"/></svg>
<div class="t" style="left:65px;top:317px;letter-spacing:.1px;word-spacing:0px;letter-spacing:-0.050px;">Управление модулями</div>
</div>
<div class="a" style="left:5px;top:586px;width:196px;height:16px;background-color:#eeece8;background-image:repeating-conic-gradient(#d4d0c8 0 25%,#f6f5f2 0 50%);background-size:2px 2px"></div>
<div class="btn" style="left:5px;top:586px;width:16px;height:16px"></div>
<div class="btn" style="left:21px;top:586px;width:50px;height:16px"></div>
<div class="btn" style="left:169px;top:586px;width:16px;height:16px"></div>
<div class="btn" style="left:185px;top:586px;width:16px;height:16px"></div>
<svg class="a" style="left:0px;top:586px" width="210" height="16" viewBox="0 0 210 16"><path d="M10 8 L14 4 L14 12 Z" fill="#000"/><path d="M174 8 L178 4 L178 12 Z" fill="#000"/><path d="M195 8 L191 4 L191 12 Z" fill="#000"/><rect x="37" y="4" width="1" height="1" fill="#8a8781"/><rect x="38" y="5" width="1" height="1" fill="#fff"/><rect x="37" y="8" width="1" height="1" fill="#8a8781"/><rect x="38" y="9" width="1" height="1" fill="#fff"/><rect x="37" y="12" width="1" height="1" fill="#8a8781"/><rect x="38" y="13" width="1" height="1" fill="#fff"/><rect x="41" y="4" width="1" height="1" fill="#8a8781"/><rect x="42" y="5" width="1" height="1" fill="#fff"/><rect x="41" y="8" width="1" height="1" fill="#8a8781"/><rect x="42" y="9" width="1" height="1" fill="#fff"/><rect x="41" y="12" width="1" height="1" fill="#8a8781"/><rect x="42" y="13" width="1" height="1" fill="#fff"/><rect x="45" y="4" width="1" height="1" fill="#8a8781"/><rect x="46" y="5" width="1" height="1" fill="#fff"/><rect x="45" y="8" width="1" height="1" fill="#8a8781"/><rect x="46" y="9" width="1" height="1" fill="#fff"/><rect x="45" y="12" width="1" height="1" fill="#8a8781"/><rect x="46" y="13" width="1" height="1" fill="#fff"/><rect x="49" y="4" width="1" height="1" fill="#8a8781"/><rect x="50" y="5" width="1" height="1" fill="#fff"/><rect x="49" y="8" width="1" height="1" fill="#8a8781"/><rect x="50" y="9" width="1" height="1" fill="#fff"/><rect x="49" y="12" width="1" height="1" fill="#8a8781"/><rect x="50" y="13" width="1" height="1" fill="#fff"/><rect x="53" y="4" width="1" height="1" fill="#8a8781"/><rect x="54" y="5" width="1" height="1" fill="#fff"/><rect x="53" y="8" width="1" height="1" fill="#8a8781"/><rect x="54" y="9" width="1" height="1" fill="#fff"/><rect x="53" y="12" width="1" height="1" fill="#8a8781"/><rect x="54" y="13" width="1" height="1" fill="#fff"/></svg>
<div class="edit" style="left:3px;top:611px;width:200px;height:20px"></div>
<svg class="a" style="left:205px;top:254px" width="4" height="185" viewBox="0 0 4 185"><rect x="0" y="0" width="2" height="2" fill="#a6a29b"/><rect x="1" y="1" width="2" height="2" fill="#fff"/><rect x="1" y="1" width="1" height="1" fill="#d4d0c8"/><rect x="0" y="5" width="2" height="2" fill="#a6a29b"/><rect x="1" y="6" width="2" height="2" fill="#fff"/><rect x="1" y="6" width="1" height="1" fill="#d4d0c8"/><rect x="0" y="10" width="2" height="2" fill="#a6a29b"/><rect x="1" y="11" width="2" height="2" fill="#fff"/><rect x="1" y="11" width="1" height="1" fill="#d4d0c8"/><rect x="0" y="15" width="2" height="2" fill="#a6a29b"/><rect x="1" y="16" width="2" height="2" fill="#fff"/><rect x="1" y="16" width="1" height="1" fill="#d4d0c8"/><rect x="0" y="20" width="2" height="2" fill="#a6a29b"/><rect x="1" y="21" width="2" height="2" fill="#fff"/><rect x="1" y="21" width="1" height="1" fill="#d4d0c8"/><rect x="0" y="25" width="2" height="2" fill="#a6a29b"/><rect x="1" y="26" width="2" height="2" fill="#fff"/><rect x="1" y="26" width="1" height="1" fill="#d4d0c8"/><rect x="0" y="30" width="2" height="2" fill="#a6a29b"/><rect x="1" y="31" width="2" height="2" fill="#fff"/><rect x="1" y="31" width="1" height="1" fill="#d4d0c8"/><rect x="0" y="35" width="2" height="2" fill="#a6a29b"/><rect x="1" y="36" width="2" height="2" fill="#fff"/><rect x="1" y="36" width="1" height="1" fill="#d4d0c8"/><rect x="0" y="40" width="2" height="2" fill="#a6a29b"/><rect x="1" y="41" width="2" height="2" fill="#fff"/><rect x="1" y="41" width="1" height="1" fill="#d4d0c8"/><rect x="0" y="45" width="2" height="2" fill="#a6a29b"/><rect x="1" y="46" width="2" height="2" fill="#fff"/><rect x="1" y="46" width="1" height="1" fill="#d4d0c8"/><rect x="0" y="50" width="2" height="2" fill="#a6a29b"/><rect x="1" y="51" width="2" height="2" fill="#fff"/><rect x="1" y="51" width="1" height="1" fill="#d4d0c8"/><rect x="0" y="55" width="2" height="2" fill="#a6a29b"/><rect x="1" y="56" width="2" height="2" fill="#fff"/><rect x="1" y="56" width="1" height="1" fill="#d4d0c8"/><rect x="0" y="60" width="2" height="2" fill="#a6a29b"/><rect x="1" y="61" width="2" height="2" fill="#fff"/><rect x="1" y="61" width="1" height="1" fill="#d4d0c8"/><rect x="0" y="65" width="2" height="2" fill="#a6a29b"/><rect x="1" y="66" width="2" height="2" fill="#fff"/><rect x="1" y="66" width="1" height="1" fill="#d4d0c8"/><rect x="0" y="70" width="2" height="2" fill="#a6a29b"/><rect x="1" y="71" width="2" height="2" fill="#fff"/><rect x="1" y="71" width="1" height="1" fill="#d4d0c8"/><rect x="0" y="75" width="2" height="2" fill="#a6a29b"/><rect x="1" y="76" width="2" height="2" fill="#fff"/><rect x="1" y="76" width="1" height="1" fill="#d4d0c8"/><rect x="0" y="80" width="2" height="2" fill="#a6a29b"/><rect x="1" y="81" width="2" height="2" fill="#fff"/><rect x="1" y="81" width="1" height="1" fill="#d4d0c8"/><rect x="0" y="85" width="2" height="2" fill="#a6a29b"/><rect x="1" y="86" width="2" height="2" fill="#fff"/><rect x="1" y="86" width="1" height="1" fill="#d4d0c8"/><rect x="0" y="90" width="2" height="2" fill="#a6a29b"/><rect x="1" y="91" width="2" height="2" fill="#fff"/><rect x="1" y="91" width="1" height="1" fill="#d4d0c8"/><rect x="0" y="95" width="2" height="2" fill="#a6a29b"/><rect x="1" y="96" width="2" height="2" fill="#fff"/><rect x="1" y="96" width="1" height="1" fill="#d4d0c8"/><rect x="0" y="100" width="2" height="2" fill="#a6a29b"/><rect x="1" y="101" width="2" height="2" fill="#fff"/><rect x="1" y="101" width="1" height="1" fill="#d4d0c8"/><rect x="0" y="105" width="2" height="2" fill="#a6a29b"/><rect x="1" y="106" width="2" height="2" fill="#fff"/><rect x="1" y="106" width="1" height="1" fill="#d4d0c8"/><rect x="0" y="110" width="2" height="2" fill="#a6a29b"/><rect x="1" y="111" width="2" height="2" fill="#fff"/><rect x="1" y="111" width="1" height="1" fill="#d4d0c8"/><rect x="0" y="115" width="2" height="2" fill="#a6a29b"/><rect x="1" y="116" width="2" height="2" fill="#fff"/><rect x="1" y="116" width="1" height="1" fill="#d4d0c8"/><rect x="0" y="120" width="2" height="2" fill="#a6a29b"/><rect x="1" y="121" width="2" height="2" fill="#fff"/><rect x="1" y="121" width="1" height="1" fill="#d4d0c8"/><rect x="0" y="125" width="2" height="2" fill="#a6a29b"/><rect x="1" y="126" width="2" height="2" fill="#fff"/><rect x="1" y="126" width="1" height="1" fill="#d4d0c8"/><rect x="0" y="130" width="2" height="2" fill="#a6a29b"/><rect x="1" y="131" width="2" height="2" fill="#fff"/><rect x="1" y="131" width="1" height="1" fill="#d4d0c8"/><rect x="0" y="135" width="2" height="2" fill="#a6a29b"/><rect x="1" y="136" width="2" height="2" fill="#fff"/><rect x="1" y="136" width="1" height="1" fill="#d4d0c8"/><rect x="0" y="140" width="2" height="2" fill="#a6a29b"/><rect x="1" y="141" width="2" height="2" fill="#fff"/><rect x="1" y="141" width="1" height="1" fill="#d4d0c8"/><rect x="0" y="145" width="2" height="2" fill="#a6a29b"/><rect x="1" y="146" width="2" height="2" fill="#fff"/><rect x="1" y="146" width="1" height="1" fill="#d4d0c8"/><rect x="0" y="150" width="2" height="2" fill="#a6a29b"/><rect x="1" y="151" width="2" height="2" fill="#fff"/><rect x="1" y="151" width="1" height="1" fill="#d4d0c8"/><rect x="0" y="155" width="2" height="2" fill="#a6a29b"/><rect x="1" y="156" width="2" height="2" fill="#fff"/><rect x="1" y="156" width="1" height="1" fill="#d4d0c8"/><rect x="0" y="160" width="2" height="2" fill="#a6a29b"/><rect x="1" y="161" width="2" height="2" fill="#fff"/><rect x="1" y="161" width="1" height="1" fill="#d4d0c8"/><rect x="0" y="165" width="2" height="2" fill="#a6a29b"/><rect x="1" y="166" width="2" height="2" fill="#fff"/><rect x="1" y="166" width="1" height="1" fill="#d4d0c8"/><rect x="0" y="170" width="2" height="2" fill="#a6a29b"/><rect x="1" y="171" width="2" height="2" fill="#fff"/><rect x="1" y="171" width="1" height="1" fill="#d4d0c8"/><rect x="0" y="175" width="2" height="2" fill="#a6a29b"/><rect x="1" y="176" width="2" height="2" fill="#fff"/><rect x="1" y="176" width="1" height="1" fill="#d4d0c8"/><rect x="0" y="180" width="2" height="2" fill="#a6a29b"/><rect x="1" y="181" width="2" height="2" fill="#fff"/><rect x="1" y="181" width="1" height="1" fill="#d4d0c8"/></svg>
<div class="a" style="left:209px;top:66px;width:716px;height:565px;border-left:1px solid #fff;border-top:1px solid #fff;border-right:1px solid #000;border-bottom:1px solid #000"></div>
<div class="a" style="left:210px;top:67px;width:714px;height:563px;border-right:1px solid #8f8c86;border-bottom:1px solid #8f8c86"></div>
<svg class="a" style="left:220px;top:77px" width="32" height="32" viewBox="0 0 32 32"><g transform="scale(1.0)"><ellipse cx="16" cy="15.5" rx="15.3" ry="15" fill="url(#gblue)" stroke="#5a6a90" stroke-width=".8"/><rect x="5.5" y="7" width="15" height="7" fill="#0a0a0a"/><path d="M7.5 8.5 h2 v4 h-2 M10.5 8.5 v4 h2 v-4 z M14 12.5 h.8 M16 8.5 h2 v2 h-2 z M18 10.5 v2" fill="none" stroke="#30d030" stroke-width="1"/><path d="M22.5 14 v7.5" stroke="#888" stroke-width=".8"/><path d="M17.5 16.5 L22 21.3 L17.5 26 Z M27 16.5 L22 21.3 L27 26 Z" fill="#f0f0f0" stroke="#222" stroke-width=".7"/><path d="M4.5 21.5 H30" stroke="#f0f020" stroke-width="1.2"/><path d="M30.5 5 L13.5 17.5" stroke="#d5b088" stroke-width="5.5" stroke-linecap="butt"/><path d="M15.5 16 L11 19.5" stroke="#e8dc90" stroke-width="4"/><path d="M12 19 L10 20.5" stroke="#111" stroke-width="1.5"/><circle cx="7.5" cy="24" r="7" fill="#cdd47e" stroke="#3a3c20" stroke-width="1"/><path d="M4 22 a5 5 0 0 1 6 -3" stroke="#eef0b0" stroke-width="1.5" fill="none"/><path d="M11 21 L5 28 M8 24.5 L14 31" stroke="#000" stroke-width="1.4"/></g></svg>
<div class="t" style="left:501.5px;top:82px;font-size:21px;line-height:22px;font-weight:bold;transform:scaleX(1.05) skewX(-12deg);transform-origin:0 17px;word-spacing:0;letter-spacing:0.155px;">Модуль: Vision</div>
<div class="a" style="left:220px;top:140px;width:694px;height:480px;border:1px solid #86837d;border-radius:2px"></div>
<div class="a" style="left:221px;top:141px;width:692px;height:478px;border:1px solid #e4e2dd"></div>
<div class="a" style="left:222px;top:142px;width:690px;height:476px;border-top:2px solid #8b8882;border-left:2px solid #8b8882;border-right:1px solid #8b8882;border-bottom:1px solid #8b8882;border-radius:2px"></div>
<div class="a" style="left:440px;top:123px;width:71px;height:18px;border:1px solid #86837d;border-bottom:none;border-radius:3px 3px 0 0;background:linear-gradient(#efedea,#d5d1ca);box-shadow:inset 0 1px 0 #c8d4f0"></div>
<div class="a" style="left:220px;top:120px;width:220px;height:22px;border:1px solid #86837d;border-bottom:none;border-radius:3px 3px 0 0;background:#d4d0c8"></div>
<div class="a" style="left:221px;top:140px;width:218px;height:2px;background:#d4d0c8"></div>
<div class="t" style="left:231.0px;top:124px;letter-spacing:0.110px;">Пользовательский интерфейс</div>
<div class="t" style="left:452.0px;top:125px;letter-spacing:-0.150px;">Модуль</div>
<div class="a" style="left:233px;top:160px;width:668px;height:241px;border:1px solid #8a8781;border-radius:3px"></div>
<div class="a" style="left:240px;top:152px;width:75px;height:14px;background:#d4d0c8"></div>
<div class="t" style="left:243.0px;top:153px;letter-spacing:0.050px;">Состояние</div>
<div class="t" style="left:238.0px;top:172px;letter-spacing:0.030px;">Выполняется:</div>
<div class="a" style="left:332px;top:172px;width:13px;height:13px;border:1px solid #86837d;background:#fff"></div>
<div class="t" style="left:238.0px;top:189px;letter-spacing:0.125px;">Количество экранов: <b>1</b></div>
<div class="t" style="left:237.5px;top:206px;letter-spacing:0.055px;">Основные окна:</div>
<div class="edit" style="left:238px;top:220px;width:658px;height:176px;box-shadow:inset 1px 1px 0 #a9a6a0"></div>
<div class="a" style="left:233px;top:411px;width:668px;height:196px;border:1px solid #8a8781;border-radius:3px"></div>
<div class="a" style="left:240px;top:403px;width:99px;height:14px;background:#d4d0c8"></div>
<div class="t" style="left:242.5px;top:404px;letter-spacing:0.154px;">Опции модуля</div>
<div class="t" style="left:238.0px;top:426px;letter-spacing:.55px;letter-spacing:-0.113px;">Станция движка СВУ:</div>
<div class="btn" style="left:382px;top:423px;width:126px;height:20px"></div>
<div class="a" style="left:491px;top:424px;width:1px;height:18px;background:#86837d"></div>
<div class="t" style="left:387px;top:426px;letter-spacing:0;">LH</div>
<div class="btn" style="left:238px;top:446px;width:367px;height:24px"></div>
<div class="t" style="left:242.5px;top:451px;letter-spacing:0.173px;">Переход к конфигурации перечня удалённых станций</div>
<div class="t" style="left:238.0px;top:476px;letter-spacing:0.042px;">Стартовый пользователь:</div>
<div class="edit" style="left:409px;top:473px;width:487px;height:20px"></div>
<div class="t" style="left:238.0px;top:499px;letter-spacing:-0.037px;">Пароль пользователя:</div>
<div class="edit" style="left:386px;top:496px;width:510px;height:20px"></div>
<div class="t" style="left:391.0px;top:502px;font-size:16px;line-height:15px;letter-spacing:0.166px;">*******</div>
<div class="t" style="left:238.0px;top:522px;letter-spacing:0.018px;">Время восстановления подключения, с:</div>
<div class="edit" style="left:503px;top:519px;width:109px;height:20px"></div>
<div class="t" style="left:506px;top:522px;">60</div>
<div class="t" style="left:238.0px;top:545px;letter-spacing:0.111px;">Время жизни страниц в кеше:</div>
<div class="edit" style="left:442px;top:542px;width:136px;height:20px"></div>
<div class="t" style="left:445px;top:545px;">1</div>
<div class="t" style="left:238.0px;top:568px;letter-spacing:0.133px;">Перечень запускаемых проектов:</div>
<div class="edit" style="left:464px;top:565px;width:432px;height:20px"></div>
<div class="btn" style="left:879px;top:565px;width:17px;height:20px;border-radius:0 2px 2px 0"></div>
<div class="t" style="left:238.0px;top:588px;letter-spacing:0.145px;">Выход при закрытии последнего исполняющегося проекта:</div>
<div class="a" style="left:635px;top:588px;width:13px;height:13px;border:1px solid #86837d;background:#fff"></div>
<svg class="a" style="left:0px;top:0px" width="928" height="657" viewBox="0 0 928 657"><path d="M336 176 L341.5 181.5 M341.5 176 L336 181.5" stroke="#000" stroke-width="3.2" stroke-linecap="round"/><path d="M639 592 L644.5 597.5 M644.5 592 L639 597.5" stroke="#000" stroke-width="3.2" stroke-linecap="round"/><path d="M495.5 430 L503.5 430 L499.5 435 Z" fill="#000"/><path d="M883.5 572 L891.5 572 L887.5 577 Z" fill="#000"/></svg>
<div class="a" style="left:841px;top:636px;width:20px;height:20px;border:1px solid #8a8781;border-radius:2px"></div>
<div class="a" style="left:844px;top:639px;width:14px;height:14px;background:#eceae6;border-right:2px solid #000;border-bottom:2px solid #000;border-left:1px solid #fff;border-top:1px solid #fff"></div>
<svg class="a" style="left:846px;top:643px" width="10" height="6" viewBox="0 0 10 6"><path d="M1 1 L9 1 L5 5 Z" fill="#000"/></svg>
<div class="a" style="left:863px;top:636px;width:11px;height:20px;border:1px solid #8a8781;border-radius:2px"></div>
<div class="t" style="left:865.0px;top:640px;font-size:16px;letter-spacing:1.250px;">*</div>
<div class="a" style="left:876px;top:636px;width:30px;height:20px;border:1px solid #8a8781;border-radius:2px"></div>
<div class="t" style="left:877.0px;top:637px;color:#f00;font-size:15px;line-height:17px;letter-spacing:-0.619px;">root</div>
<svg class="a" style="left:912px;top:641px" width="16" height="16" viewBox="0 0 16 16"><path d="M15 3 L3 15 M15 7 L7 15 M15 11 L11 15" stroke="#fff" stroke-width="1"/><path d="M16 4 L4 16 M16 8 L8 16 M16 12 L12 16" stroke="#8a8781" stroke-width="1"/></svg>
</div></body></html>
